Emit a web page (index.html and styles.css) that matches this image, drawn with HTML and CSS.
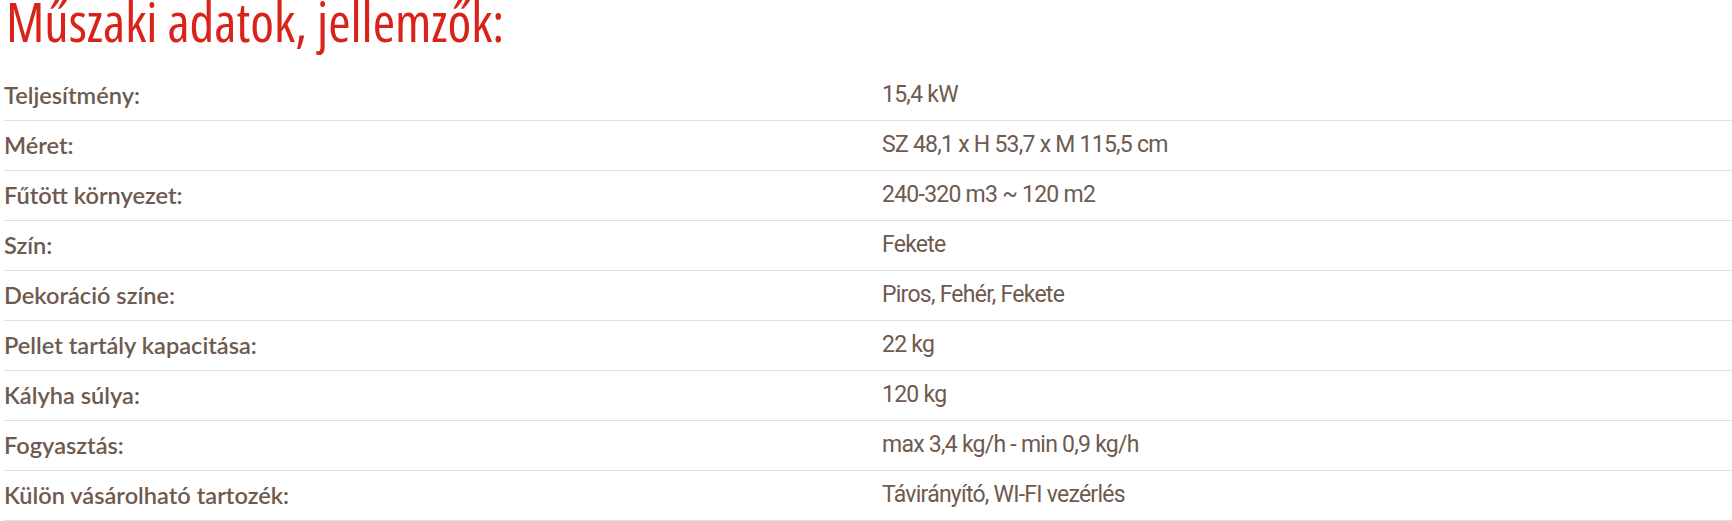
FILE: index.html
```html
<!DOCTYPE html>
<html lang="hu">
<head>
<meta charset="utf-8">
<link rel="stylesheet" href="styles.css">
</head>
<body>
<section class="specs">
  <h2 class="specs-title">Műszaki adatok, jellemzők:</h2>
  <div class="specs-table">
    <div class="row"><div class="label">Teljesítmény:</div><div class="value">15,4 kW</div></div>
    <div class="row"><div class="label">Méret:</div><div class="value">SZ 48,1 x H 53,7 x M 115,5 cm</div></div>
    <div class="row"><div class="label">Fűtött környezet:</div><div class="value">240-320 m3 ~ 120 m2</div></div>
    <div class="row"><div class="label">Szín:</div><div class="value">Fekete</div></div>
    <div class="row"><div class="label">Dekoráció színe:</div><div class="value">Piros, Fehér, Fekete</div></div>
    <div class="row"><div class="label">Pellet tartály kapacitása:</div><div class="value">22 kg</div></div>
    <div class="row"><div class="label">Kályha súlya:</div><div class="value">120 kg</div></div>
    <div class="row"><div class="label">Fogyasztás:</div><div class="value">max 3,4 kg/h - min 0,9 kg/h</div></div>
    <div class="row"><div class="label">Külön vásárolható tartozék:</div><div class="value">Távirányító, WI-FI vezérlés</div></div>
  </div>
</section>
</body>
</html>
```
FILE: styles.css
```css
html, body {
  margin: 0;
  padding: 0;
  background: #ffffff;
}
.specs {
  padding-left: 4px;
}
.specs-title {
  margin: 0;
  height: 71px;
  padding-left: 2px;
  box-sizing: border-box;
  font-family: "Open Sans", "Liberation Sans", sans-serif;
  font-stretch: 75%;
  font-weight: 400;
  font-size: 54px;
  line-height: 42px;
  color: #d9231a;
}
.specs-table {
  display: flex;
  flex-direction: column;
}
.row {
  display: grid;
  grid-template-columns: 878px 1fr;
  align-items: center;
  height: 49px;
  border-bottom: 1px solid #e0e0e0;
}
.label {
  font-family: Lato, sans-serif;
  font-weight: 600;
  font-size: 23.6px;
  color: #6e5a4e;
  padding-bottom: 2px;
}
.value {
  font-family: Roboto, sans-serif;
  font-weight: 400;
  font-size: 23px;
  letter-spacing: -0.75px;
  color: #6e5a4e;
  padding-bottom: 2px;
}
```
